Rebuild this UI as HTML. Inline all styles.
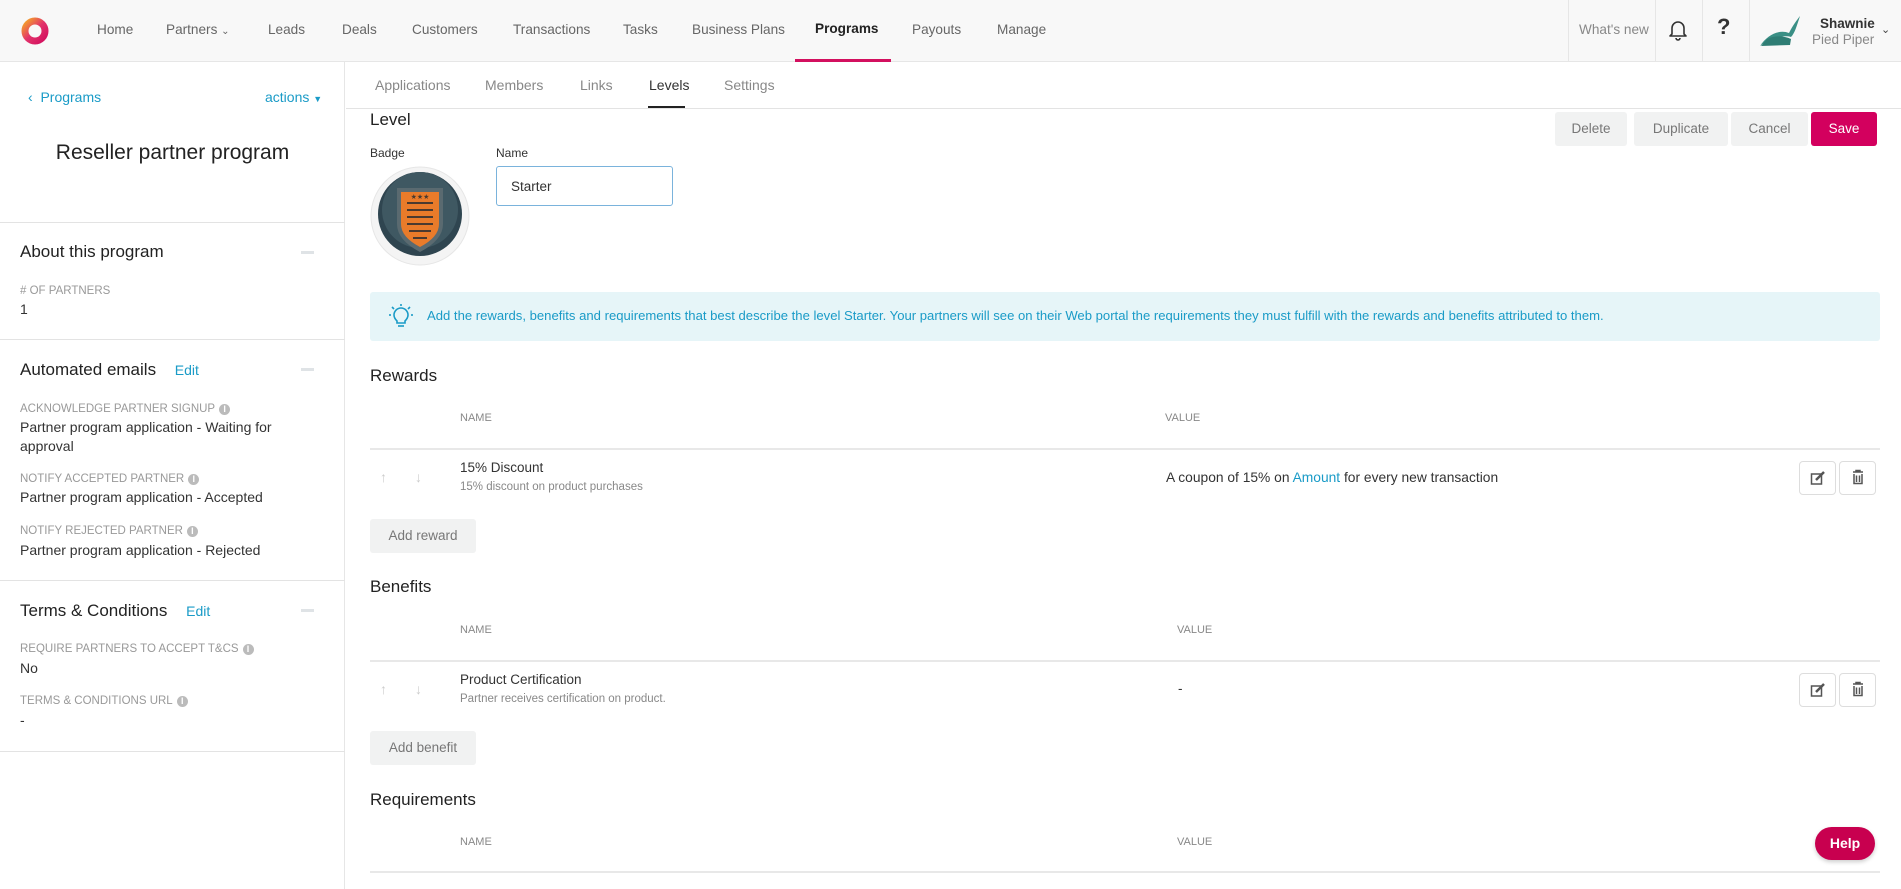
<!DOCTYPE html>
<html><head><meta charset="utf-8"><style>
*{box-sizing:border-box;margin:0;padding:0}
body{width:1901px;height:889px;overflow:hidden;background:#fff;font-family:"Liberation Sans",sans-serif;color:#333;position:relative}
.t{position:absolute;white-space:nowrap;line-height:20px}
.nav{position:absolute;left:0;top:0;width:1901px;height:62px;background:#f8f8f8;border-bottom:1px solid #e6e6e6}
.nav .t{top:20px;font-size:13.6px;color:#666}
.vd{position:absolute;top:0;width:1px;height:62px;background:#e6e6e6}
.side{position:absolute;left:0;top:62px;width:345px;height:827px;border-right:1px solid #e6e6e6}
.hr{position:absolute;height:1px;background:#e3e3e3}
.lbl{font-size:11.5px;color:#999;text-transform:uppercase}
.val{font-size:14px;color:#333}
.h3{font-size:17px;color:#222}
.blue{color:#1a9bc7}
.minus{position:absolute;left:301px;width:13px;height:3px;background:#dfe3e6}
.btn{position:absolute;background:#f1f2f2;border-radius:3px;font-size:13.5px;color:#777;text-align:center}
.ib{position:absolute;width:37px;height:34px;border:1px solid #ddd;border-radius:4px;background:#fff}
.th{font-size:11px;color:#888}
.info{display:inline-block;width:11px;height:11px;border-radius:50%;background:#bbb;color:#fff;font-size:9px;line-height:11px;text-align:center;margin-left:4px;font-weight:bold;vertical-align:0}
</style></head><body>
<div class="nav">
 <svg style="position:absolute;left:20px;top:16px" width="30" height="30" viewBox="0 0 30 30"><defs><linearGradient id="g" x1="0" y1="0" x2="1" y2="1"><stop offset="0" stop-color="#f4a12a"/><stop offset=".5" stop-color="#e2336b"/><stop offset="1" stop-color="#d3105f"/></linearGradient></defs><circle cx="15" cy="15" r="10" fill="none" stroke="url(#g)" stroke-width="7"/></svg>
 <div class="t" style="left:97px">Home</div>
 <div class="t" style="left:166px">Partners <span style="font-size:10px">⌄</span></div>
 <div class="t" style="left:268px">Leads</div>
 <div class="t" style="left:342px">Deals</div>
 <div class="t" style="left:412px">Customers</div>
 <div class="t" style="left:513px">Transactions</div>
 <div class="t" style="left:623px">Tasks</div>
 <div class="t" style="left:692px">Business Plans</div>
 <div class="t" style="left:815px;color:#222;font-weight:bold;top:19px">Programs</div>
 <div style="position:absolute;left:795px;top:59px;width:96px;height:3px;background:#d3105f"></div>
 <div class="t" style="left:912px">Payouts</div>
 <div class="t" style="left:997px">Manage</div>
 <div class="vd" style="left:1568px"></div><div class="vd" style="left:1655px"></div><div class="vd" style="left:1702px"></div><div class="vd" style="left:1749px"></div>
 <div class="t" style="left:1579px;color:#888">What's new</div>
 <svg style="position:absolute;left:1668px;top:19px" width="20" height="22" viewBox="0 0 20 22"><path d="M4 15V9a6 6 0 0 1 12 0v6l2 2H2z M8 19a2 2 0 0 0 4 0" fill="none" stroke="#333" stroke-width="1.6" stroke-linejoin="round"/></svg>
 <div class="t" style="left:1717px;top:17px;font-size:22px;font-weight:bold;color:#333">?</div>
 <svg style="position:absolute;left:1759px;top:15px" width="44" height="32" viewBox="0 0 44 32"><path d="M1 31 C8 20 20 14 30 18 C34 10 38 5 41 1 C38 10 36 18 32 22 C26 20 12 22 1 31Z" fill="#3a8f85"/><path d="M8 24 C16 20 26 21 32 24 L31 30 L2 31Z" fill="#2f7d74"/></svg>
 <div class="t" style="left:1820px;top:14px;font-size:13.5px;font-weight:bold;color:#333">Shawnie</div>
 <div class="t" style="left:1812px;top:30px;font-size:13.5px;color:#888">Pied Piper</div>
 <div class="t" style="left:1881px;top:20px;font-size:11px;color:#444">⌄</div>
</div>

<div class="side">
 <div class="t blue" style="left:28px;top:25px;font-size:14px">‹&nbsp; Programs</div>
 <div class="t blue" style="left:265px;top:25px;font-size:14px">actions <span style="font-size:9px">▼</span></div>
 <div class="t" style="left:0;width:345px;text-align:center;top:78px;font-size:21px;color:#222;line-height:26px">Reseller partner program</div>
 <div class="hr" style="left:0;width:345px;top:160px"></div>
 <div class="t h3" style="left:20px;top:180px">About this program</div><div class="minus" style="top:189px"></div>
 <div class="t lbl" style="left:20px;top:219px"># of partners</div>
 <div class="t val" style="left:20px;top:237px">1</div>
 <div class="hr" style="left:0;width:345px;top:277px"></div>
 <div class="t h3" style="left:20px;top:298px">Automated emails <span class="blue" style="font-size:14px;margin-left:14px">Edit</span></div><div class="minus" style="top:306px"></div>
 <div class="t lbl" style="left:20px;top:337px">Acknowledge partner signup<span class="info">i</span></div>
 <div class="t val" style="left:20px;top:355px">Partner program application - Waiting for</div>
 <div class="t val" style="left:20px;top:374px">approval</div>
 <div class="t lbl" style="left:20px;top:407px">Notify accepted partner<span class="info">i</span></div>
 <div class="t val" style="left:20px;top:425px">Partner program application - Accepted</div>
 <div class="t lbl" style="left:20px;top:459px">Notify rejected partner<span class="info">i</span></div>
 <div class="t val" style="left:20px;top:478px">Partner program application - Rejected</div>
 <div class="hr" style="left:0;width:345px;top:518px"></div>
 <div class="t h3" style="left:20px;top:539px">Terms &amp; Conditions <span class="blue" style="font-size:14px;margin-left:14px">Edit</span></div><div class="minus" style="top:547px"></div>
 <div class="t lbl" style="left:20px;top:577px">Require partners to accept T&amp;Cs<span class="info">i</span></div>
 <div class="t val" style="left:20px;top:596px">No</div>
 <div class="t lbl" style="left:20px;top:629px">Terms &amp; conditions URL<span class="info">i</span></div>
 <div class="t val" style="left:20px;top:648px">-</div>
 <div class="hr" style="left:0;width:345px;top:689px"></div>
</div>

<!-- subtabs -->
<div class="t" style="left:375px;top:75px;font-size:14px;color:#888">Applications</div>
<div class="t" style="left:485px;top:75px;font-size:14px;color:#888">Members</div>
<div class="t" style="left:580px;top:75px;font-size:14px;color:#888">Links</div>
<div class="t" style="left:649px;top:75px;font-size:14px;color:#333">Levels</div>
<div style="position:absolute;left:648px;top:106px;width:37px;height:2px;background:#222"></div>
<div class="t" style="left:724px;top:75px;font-size:14px;color:#888">Settings</div>
<div class="hr" style="left:346px;width:1555px;top:108px"></div>

<div class="t" style="left:370px;top:110px;font-size:17px;color:#222">Level</div>
<div class="btn" style="left:1555px;top:112px;width:72px;height:34px;line-height:34px">Delete</div>
<div class="btn" style="left:1634px;top:112px;width:94px;height:34px;line-height:34px">Duplicate</div>
<div class="btn" style="left:1731px;top:112px;width:77px;height:34px;line-height:34px">Cancel</div>
<div class="btn" style="left:1811px;top:112px;width:66px;height:34px;line-height:34px;background:#d3005e;color:#fff">Save</div>

<div class="t" style="left:370px;top:143px;font-size:12px;color:#333">Badge</div>
<div class="t" style="left:496px;top:143px;font-size:12px;color:#333">Name</div>
<svg style="position:absolute;left:370px;top:166px" width="100" height="100" viewBox="0 0 100 100">
 <circle cx="50" cy="50" r="49" fill="#f4f4f4" stroke="#e6e6e6"/>
 <circle cx="50" cy="48" r="42" fill="#2f4550"/><circle cx="50" cy="44" r="38" fill="#3f5862"/>
 <path d="M27 22 L73 22 L73 58 Q73 74 50 86 Q27 74 27 58Z" fill="#5a6a70"/>
 <path d="M31 26 L69 26 L69 58 Q69 71 50 81 Q31 71 31 58Z" fill="#e97b2a"/>
 <g stroke="#4a3a30" stroke-width="2"><line x1="37" y1="37" x2="63" y2="37"/><line x1="37" y1="44" x2="63" y2="44"/><line x1="37" y1="51" x2="63" y2="51"/><line x1="37" y1="58" x2="63" y2="58"/><line x1="39" y1="65" x2="61" y2="65"/><line x1="43" y1="72" x2="57" y2="72"/></g>
 <text x="50" y="33" font-size="7" fill="#4a3a30" text-anchor="middle" font-family="DejaVu Sans">★★★</text>
</svg>
<div style="position:absolute;left:496px;top:166px;width:177px;height:40px;border:1px solid #7ab3dc;border-radius:3px"></div>
<div class="t" style="left:511px;top:177px;font-size:13.5px;color:#333">Starter</div>

<div style="position:absolute;left:370px;top:292px;width:1510px;height:49px;background:#e6f5f8;border-radius:3px"></div>
<svg style="position:absolute;left:389px;top:304px" width="24" height="26" viewBox="0 0 24 26"><g fill="none" stroke="#1a9bc7" stroke-width="1.6"><path d="M8 17 Q5 14 5 11 a7 7 0 0 1 14 0 Q19 14 16 17 L16 19 H8Z"/><line x1="9" y1="22" x2="15" y2="22"/><line x1="12" y1="0" x2="12" y2="2"/><line x1="0" y1="11" x2="2" y2="11"/><line x1="22" y1="11" x2="24" y2="11"/><line x1="3" y1="3" x2="5" y2="5"/><line x1="21" y1="3" x2="19" y2="5"/></g></svg>
<div class="t" style="left:427px;top:306px;font-size:13.1px;color:#1a9bc7">Add the rewards, benefits and requirements that best describe the level Starter. Your partners will see on their Web portal the requirements they must fulfill with the rewards and benefits attributed to them.</div>

<!-- Rewards -->
<div class="t" style="left:370px;top:366px;font-size:17px;color:#222">Rewards</div>
<div class="t th" style="left:460px;top:408px">NAME</div>
<div class="t th" style="left:1165px;top:408px">VALUE</div>
<div class="hr" style="left:370px;width:1510px;top:448px;height:2px;background:#e8e8e8"></div>
<div class="t" style="left:380px;top:467px;color:#ccc;font-size:14px">↑</div>
<div class="t" style="left:415px;top:467px;color:#ccc;font-size:14px">↓</div>
<div class="t" style="left:460px;top:458px;font-size:13.5px;color:#333">15% Discount</div>
<div class="t" style="left:460px;top:477px;font-size:11.5px;color:#888">15% discount on product purchases</div>
<div class="t" style="left:1166px;top:468px;font-size:13.8px;color:#333">A coupon of 15% on <span class="blue">Amount</span> for every new transaction</div>
<div class="ib" style="left:1799px;top:461px"></div><div class="ib" style="left:1839px;top:461px"></div>
<svg style="position:absolute;left:1810px;top:470px" width="16" height="16" viewBox="0 0 16 16"><rect x="1.5" y="4" width="10" height="10" fill="none" stroke="#555" stroke-width="1.5"/><path d="M6 10 L14 2" stroke="#555" stroke-width="2.5"/></svg>
<svg style="position:absolute;left:1850px;top:469px" width="16" height="16" viewBox="0 0 16 16"><path d="M3 3H13M6 3V1.5H10V3M4 5V14.5H12V5M6.5 6.5V13M9.5 6.5V13" fill="none" stroke="#555" stroke-width="1.5"/></svg>
<div class="btn" style="left:370px;top:519px;width:106px;height:34px;line-height:34px">Add reward</div>

<!-- Benefits -->
<div class="t" style="left:370px;top:577px;font-size:17px;color:#222">Benefits</div>
<div class="t th" style="left:460px;top:620px">NAME</div>
<div class="t th" style="left:1177px;top:620px">VALUE</div>
<div class="hr" style="left:370px;width:1510px;top:660px;height:2px;background:#e8e8e8"></div>
<div class="t" style="left:380px;top:679px;color:#ccc;font-size:14px">↑</div>
<div class="t" style="left:415px;top:679px;color:#ccc;font-size:14px">↓</div>
<div class="t" style="left:460px;top:670px;font-size:13.5px;color:#333">Product Certification</div>
<div class="t" style="left:460px;top:689px;font-size:11.5px;color:#888">Partner receives certification on product.</div>
<div class="t" style="left:1178px;top:679px;font-size:13.5px;color:#333">-</div>
<div class="ib" style="left:1799px;top:673px"></div><div class="ib" style="left:1839px;top:673px"></div>
<svg style="position:absolute;left:1810px;top:682px" width="16" height="16" viewBox="0 0 16 16"><rect x="1.5" y="4" width="10" height="10" fill="none" stroke="#555" stroke-width="1.5"/><path d="M6 10 L14 2" stroke="#555" stroke-width="2.5"/></svg>
<svg style="position:absolute;left:1850px;top:681px" width="16" height="16" viewBox="0 0 16 16"><path d="M3 3H13M6 3V1.5H10V3M4 5V14.5H12V5M6.5 6.5V13M9.5 6.5V13" fill="none" stroke="#555" stroke-width="1.5"/></svg>
<div class="btn" style="left:370px;top:731px;width:106px;height:34px;line-height:34px">Add benefit</div>

<!-- Requirements -->
<div class="t" style="left:370px;top:790px;font-size:17px;color:#222">Requirements</div>
<div class="t th" style="left:460px;top:832px">NAME</div>
<div class="t th" style="left:1177px;top:832px">VALUE</div>
<div class="hr" style="left:370px;width:1510px;top:871px;height:2px;background:#e8e8e8"></div>

<div style="position:absolute;left:1815px;top:827px;width:60px;height:33px;border-radius:17px;background:#c8004f;color:#fff;font-weight:bold;font-size:14px;text-align:center;line-height:33px;box-shadow:0 2px 4px rgba(0,0,0,.2)">Help</div>
</body></html>
